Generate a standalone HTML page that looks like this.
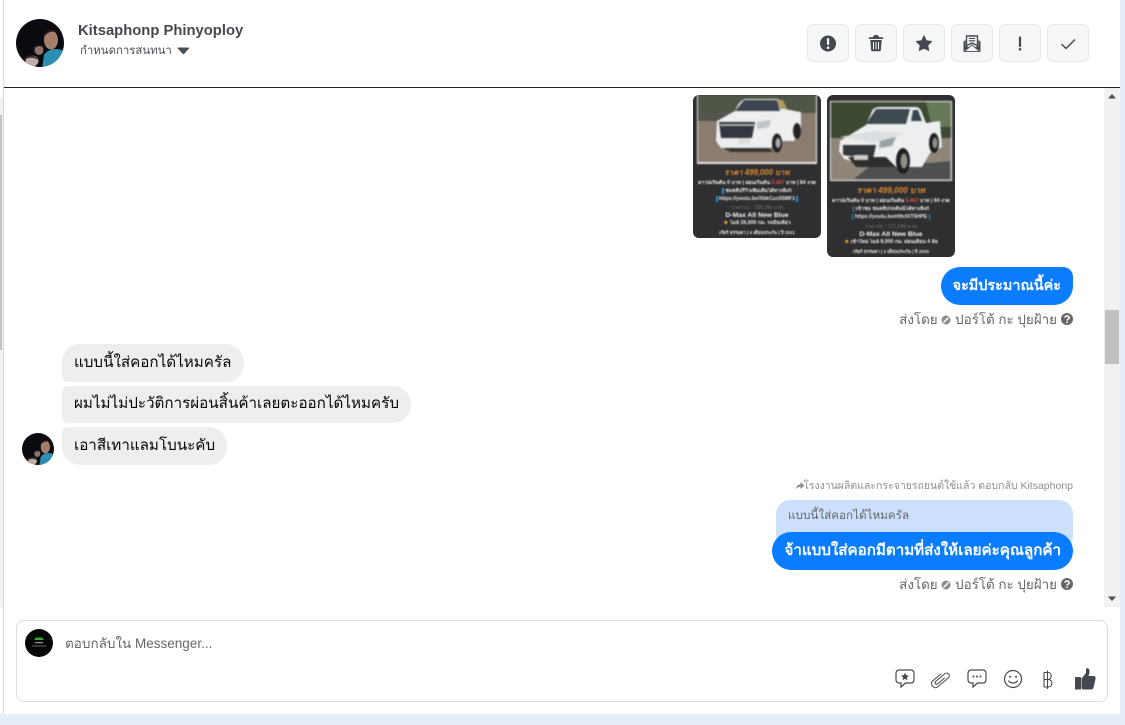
<!DOCTYPE html>
<html lang="th">
<head>
<meta charset="utf-8">
<title>Messenger</title>
<style>
html,body{margin:0;padding:0;width:1125px;height:725px;overflow:hidden;background:#e6eefa;font-family:"Liberation Sans","Noto Sans CJK SC",Tahoma,sans-serif;color:#050505}
*{box-sizing:border-box}
.abs{position:absolute}
#panel{position:absolute;left:0;top:0;width:1120px;height:714px;background:#fff}
#leftline{position:absolute;left:3px;top:0;width:1px;height:714px;background:#d8d8d8}
#hline{position:absolute;left:4px;top:87px;width:1116px;height:1px;background:#222}
.name{position:absolute;left:78px;top:21px;font-size:14.8px;font-weight:bold;color:#444950;line-height:20px;white-space:nowrap}
.sub{position:absolute;left:80px;top:44px;font-size:11.4px;color:#4b4f56;line-height:15px;white-space:nowrap}
.btn{position:absolute;top:24px;width:42px;height:38px;background:#f5f6f7;border:1px solid #e6e8eb;border-radius:6px}
.btn svg{position:absolute;left:0;top:0}
.b{position:absolute;font-size:15.2px;line-height:20px;white-space:nowrap;height:37px;padding:8px 13px;background:#eeeeee;border-radius:18px}
.me{background:#0a7cff;color:#fff;font-weight:bold;font-size:15px}
.by{position:absolute;font-size:13.4px;line-height:18px;color:#65676b;white-space:nowrap}
.pic{position:absolute;background:#2f2f31;border-radius:6px;overflow:hidden;width:128px}
.pic .t{position:absolute;left:0;right:0;text-align:center;white-space:nowrap;overflow:hidden;color:#e6e6e6;font-size:5.2px;line-height:7px;filter:blur(.4px);font-weight:bold}
#track{position:absolute;left:1104px;top:88px;width:16px;height:519px;background:#f1f1f1}
#thumb{position:absolute;left:1105px;top:310px;width:14px;height:54px;background:#c1c1c1}
#ltrack{position:absolute;left:0;top:98px;width:3px;height:509px;background:#f1f1f1}
#lthumb{position:absolute;left:0;top:115px;width:2px;height:235px;background:#c4c4c4}
#box{position:absolute;left:16px;top:620px;width:1092px;height:82px;border:1px solid #dadde1;border-radius:8px;background:#fff}
</style>
</head>
<body>
<div id="panel"></div>
<div id="ltrack"></div>
<div id="lthumb"></div>
<div id="leftline"></div>
<div id="hline"></div>

<svg class="abs" style="left:16px;top:19px" width="48" height="48" viewBox="0 0 48 48">
<defs><clipPath id="c1"><circle cx="24" cy="24" r="24"/></clipPath></defs>
<g clip-path="url(#c1)">
<rect width="48" height="48" fill="#0a0a10"/>
<path d="M28 36C32 29 44 28 50 34V50H26Z" fill="#2b8fb3"/>
<ellipse cx="35" cy="21" rx="7" ry="9.500" fill="#a57f6c"/>
<path d="M27 19C27 9 42 7 44 18L42 14C37 11 31 13 27 19Z" fill="#2a1a14"/>
<ellipse cx="23" cy="31" rx="4.500" ry="5" fill="#8f7268"/>
<path d="M16 31C17 24 28 23 29 29C24 26 20 27 16 31Z" fill="#1c1414"/>
<ellipse cx="16" cy="42" rx="6.500" ry="5.500" fill="#bdaea8"/>
<path d="M8 41C10 35 20 35 22 41C18 38 13 38 8 41Z" fill="#3a2e2c"/>
</g>
</svg>
<div class="name">Kitsaphonp Phinyoploy</div>
<div class="sub">กำหนดการสนทนา</div>
<svg class="abs" style="left:177px;top:47px" width="13" height="8" viewBox="0 0 13 8"><path d="M0.5 1.2Q0.5 0.5 1.5 0.5H11.5Q12.5 0.5 12 1.5L7.3 6.8Q6.5 7.500 5.700 6.800L1 1.800Z" fill="#4b4f56"/></svg>

<div class="btn" style="left:807px"><svg width="42" height="38" viewBox="0 0 42 38"><circle cx="20" cy="18.500" r="8" fill="#444950"/><rect x="19" y="13" width="2.200" height="7" rx="1" fill="#f5f6f7"/><circle cx="20.100" cy="22.700" r="1.300" fill="#f5f6f7"/></svg></div>
<div class="btn" style="left:855px"><svg width="42" height="38" viewBox="0 0 42 38"><path d="M13 12.200H27V14H13Z M17 12.200C17 9.300 23 9.300 23 12.200Z" fill="#444950"/><path d="M14.300 15H25.700L24.800 25.200Q24.700 26.200 23.700 26.200H16.300Q15.300 26.200 15.200 25.200Z" fill="#444950"/><path d="M17.500 17V24.400M20 17V24.400M22.500 17V24.400" stroke="#f5f6f7" stroke-width="1"/></svg></div>
<div class="btn" style="left:903px"><svg width="42" height="38" viewBox="0 0 42 38"><path d="M20 10.800L22.300 15.800L27.600 16.500L23.700 20.200L24.700 25.500L20 22.900L15.300 25.500L16.300 20.200L12.400 16.500L17.700 15.800Z" fill="#444950" stroke="#444950" stroke-width="1" stroke-linejoin="round"/></svg></div>
<div class="btn" style="left:951px"><svg width="42" height="38" viewBox="0 0 42 38"><path d="M14.500 11H25.500V20.500L20 18L14.500 20.500Z" fill="#f5f6f7" stroke="#444950" stroke-width="1.400" stroke-linejoin="round"/><path d="M16.800 13.500H23.200M16.800 15.800H23.200" stroke="#444950" stroke-width="1.100"/><path d="M11.500 16.500L13.500 15V20.500L17 22.300L11.500 26Z" fill="#444950"/><path d="M28.500 16.500L26.500 15V20.500L23 22.300L28.500 26Z" fill="#444950"/><path d="M11.500 26.300H28.500" stroke="#444950" stroke-width="1.200"/><path d="M13 26L20 19.800L27 26" fill="#f5f6f7" stroke="#444950" stroke-width=".9"/></svg></div>
<div class="btn" style="left:999px"><svg width="42" height="38" viewBox="0 0 42 38"><path d="M20 12.500V21" stroke="#444950" stroke-width="2.200" stroke-linecap="round"/><circle cx="20" cy="24.300" r="1.300" fill="#444950"/></svg></div>
<div class="btn" style="left:1047px"><svg width="42" height="38" viewBox="0 0 42 38"><path d="M13.500 19L18 23.500L27 14.500" fill="none" stroke="#444950" stroke-width="1.500"/></svg></div>

<!-- images -->
<div class="pic" style="left:693px;top:95px;height:143px">
<svg class="abs" style="left:4px;top:0;filter:blur(.7px)" width="120" height="69" viewBox="0 0 120 69">
<rect width="120" height="69" fill="#eee"/>
<rect x="1" y="0" width="118" height="67" fill="#8a7c6f"/>
<rect x="1" y="0" width="118" height="18" fill="#4f5648"/>
<path d="M1 16H32V26H1Z" fill="#55544d"/>
<path d="M20 26L38 16Q42 6 48 4H80Q85 5 88 14L103 17H104V35L97 46H78L74 53H24L19 46Z" fill="#eceef0"/>
<path d="M38 16L47 5H80L83 16Z" fill="#3d4650"/>
<path d="M80 5H86L90 14H83Z" fill="#b29b62"/>
<path d="M22 27H58L55 43H24Z" fill="#34383e"/>
<path d="M23 30H57" stroke="#d8d8d8" stroke-width="1.500"/>
<path d="M60 27L74 25L72 32L60 34Z" fill="#bfc4c8"/>
<ellipse cx="80" cy="48" rx="5" ry="9.500" fill="#222"/><ellipse cx="81" cy="48" rx="2.500" ry="5" fill="#aaa"/>
<ellipse cx="100" cy="36" rx="4" ry="8" fill="#222"/>
<path d="M26 53H72L76 57H34Z" fill="#3a3530"/>
<rect x="41" y="43" width="12" height="6" fill="#ddd"/>
</svg>
<div class="t" style="top:73px;color:#d98a35;font-size:7.800px;font-weight:bold;font-style:italic;line-height:9px">ราคา 499,000 บาท</div>
<div class="t" style="top:85px">ดาวน์เริ่มต้น 0 บาท | ผ่อนเริ่มต้น <span style="color:#e05050">5,467</span> บาท | 84 งวด</div>
<div class="t" style="top:93px"><span style="background:#2a8fd0;color:#fff">&nbsp;</span> ชมคลิปรีวิวเพิ่มเติมได้ทางลิงก์</div>
<div class="t" style="top:101px"><span style="background:#2a8fd0;color:#fff">&nbsp;</span> https://youtu.be/XbkCuz0SMF1 <span style="background:#2a8fd0;color:#fff">&nbsp;</span></div>
<div class="t" style="top:110px;color:#777;font-weight:normal">ราคารถ : 738,146 บาท</div>
<div class="t" style="top:117px;font-size:6.800px;font-weight:bold;color:#f2f2f2">D-Max All New Blue</div>
<div class="t" style="top:125px"><span style="color:#e8b030">★</span> ไมล์ 26,000 กม. รถมือเดียว</div>
<div class="t" style="top:134px;font-size:4.500px">เกียร์ ธรรมดา | 4 เดือนประกัน | ปี 2021</div>
</div>

<div class="pic" style="left:827px;top:95px;height:162px">
<svg class="abs" style="left:3px;top:6px;filter:blur(.7px)" width="122" height="80" viewBox="0 0 122 80">
<rect width="122" height="80" fill="#eee"/>
<rect x="1" y="1" width="120" height="78" fill="#8f8579"/>
<rect x="1" y="1" width="120" height="36" fill="#3c4a34"/>
<path d="M96 1H121V26H102Z" fill="#68795a"/>
<path d="M24 78L44 62H100L120 60V78Z" fill="#4e4f50"/>
<path d="M10 40L36 24L42 10Q44 6 50 6H86Q90 6 92 12L96 22L110 20L112 46L100 52L92 66H60L44 66L14 58L9 50Z" fill="#eceef0"/>
<path d="M36 23L46 8H80L76 23Z" fill="#3f4a4f"/>
<path d="M83 9H88L92 20H81Z" fill="#39454c"/>
<path d="M10 36L44 30L73 32L60 38L44 42Z" fill="#dcdfe1"/>
<path d="M13 44H46L43 58L13 54Z" fill="#33383c"/>
<path d="M50 40L66 36L62 45L49 47Z" fill="#99a2a8"/>
<ellipse cx="73" cy="60" rx="7" ry="13" fill="#1f1f20"/><ellipse cx="74" cy="60" rx="3.500" ry="7.500" fill="#8e8e88"/>
<ellipse cx="104" cy="42" rx="5" ry="10" fill="#1f1f20"/><ellipse cx="105" cy="42" rx="2.500" ry="5.500" fill="#8e8e88"/>
<path d="M18 56H56L66 66H60L26 66Z" fill="#2e2e2c"/>
<rect x="24" y="54" width="14" height="5" fill="#ccc"/>
</svg>
<div class="t" style="top:91px;color:#d98a35;font-size:8.200px;font-weight:bold;font-style:italic;line-height:10px">ราคา 499,000 บาท</div>
<div class="t" style="top:103px">ดาวน์เริ่มต้น 0 บาท | ผ่อนเริ่มต้น <span style="color:#e05050">5,467</span> บาท | 84 งวด</div>
<div class="t" style="top:111px"><span style="background:#2a8fd0;color:#fff">&nbsp;</span> เข้าชม ชมคลิปรถคันนี้ได้ทางลิงก์</div>
<div class="t" style="top:119px"><span style="background:#2a8fd0;color:#fff">&nbsp;</span> https://youtu.be/rHtcIXT5HPE <span style="background:#2a8fd0;color:#fff">&nbsp;</span></div>
<div class="t" style="top:129px;color:#777;font-weight:normal">ราคารถ : 722,146 บาท</div>
<div class="t" style="top:136px;font-size:6.800px;font-weight:bold;color:#f2f2f2">D-Max All New Blue</div>
<div class="t" style="top:144px"><span style="color:#e8b030">★</span> เข้าใหม่ ไมล์ 8,000 กม. ผ่อนเดือน 4 ล้อ</div>
<div class="t" style="top:153px;font-size:4.500px">เกียร์ ธรรมดา | 4 เดือนประกัน | ปี 2020</div>
</div>

<!-- messages -->
<div class="b me" style="right:52px;top:267px;height:38px;padding:9px 12px;font-size:14.4px;border-radius:19px 10px 19px 19px">จะมีประมาณนี้ค่ะ</div>
<div class="by" style="right:68px;top:311px">ส่งโดย <svg width="10" height="10" viewBox="0 0 10 10" style="vertical-align:-1px"><circle cx="5" cy="5" r="4.500" fill="#8a8d91"/><path d="M2.500 7.500L7.500 2.500" stroke="#fff" stroke-width="1.500"/></svg> ปอร์โต้ กะ ปุยฝ้าย</div>
<svg class="abs" style="left:1061px;top:313px" width="12" height="12" viewBox="0 0 12 12"><circle cx="6" cy="6" r="6" fill="#65676b"/><path d="M4 4.600C4 2.500 8.200 2.500 8.200 4.700C8.200 6 6.100 6 6.100 7.600" fill="none" stroke="#fff" stroke-width="1.500"/><circle cx="6.100" cy="9.400" r=".9" fill="#fff"/></svg>

<div class="b" style="left:62px;top:344px;height:38px;padding:9px 13px 9px 12px;border-radius:18px 18px 18px 6px">แบบนี้ใส่คอกได้ไหมครัล</div>
<div class="b" style="left:62px;top:386px;padding:8px 12px;border-radius:6px 18px 18px 6px">ผมไม่ไม่ปะวัติการผ่อนสิ้นค้าเลยตะออกได้ไหมครับ</div>
<div class="b" style="left:62px;top:427px;height:38px;padding:9px 12px;border-radius:6px 18px 18px 18px">เอาสีเทาแลมโบนะคับ</div>

<svg class="abs" style="left:22px;top:433px" width="32" height="32" viewBox="0 0 48 48">
<defs><clipPath id="c2"><circle cx="24" cy="24" r="24"/></clipPath></defs>
<g clip-path="url(#c2)">
<rect width="48" height="48" fill="#0a0a10"/>
<path d="M28 36C32 29 44 28 50 34V50H26Z" fill="#2b8fb3"/>
<ellipse cx="35" cy="21" rx="7" ry="9.500" fill="#a57f6c"/>
<path d="M27 19C27 9 42 7 44 18L42 14C37 11 31 13 27 19Z" fill="#2a1a14"/>
<ellipse cx="23" cy="31" rx="4.500" ry="5" fill="#8f7268"/>
<path d="M16 31C17 24 28 23 29 29C24 26 20 27 16 31Z" fill="#1c1414"/>
<ellipse cx="16" cy="42" rx="6.500" ry="5.500" fill="#bdaea8"/>
<path d="M8 41C10 35 20 35 22 41C18 38 13 38 8 41Z" fill="#3a2e2c"/>
</g>
</svg>

<svg class="abs" style="left:795px;top:481px" width="10" height="10" viewBox="0 0 10 10"><path d="M5.500 1L9.500 4.500L5.500 8V5.800C3.500 5.800 2 6.500 1 8.500C1 5.500 3 3.500 5.500 3.200Z" fill="#8a8d91"/></svg>
<div class="abs" style="right:52px;top:479px;font-size:10.500px;line-height:14px;color:#8a8d91;white-space:nowrap">โรงงานผลิตและกระจายรถยนต์ใช้แล้ว ตอบกลับ Kitsaphonp</div>
<div class="abs" style="left:776px;top:500px;width:297px;height:50px;background:#cce0fb;border-radius:14px;padding:8px 12px;font-size:11.700px;line-height:16px;color:#65676b;white-space:nowrap">แบบนี้ใส่คอกได้ไหมครัล</div>
<div class="b me" style="right:52px;top:532px;height:38px;padding:9px 12px 9px 13px;font-size:15.150px;border-radius:19px">จ้าแบบใส่คอกมีตามที่ส่งให้เลยค่ะคุณลูกค้า</div>
<div class="by" style="right:68px;top:576px">ส่งโดย <svg width="10" height="10" viewBox="0 0 10 10" style="vertical-align:-1px"><circle cx="5" cy="5" r="4.500" fill="#8a8d91"/><path d="M2.500 7.500L7.500 2.500" stroke="#fff" stroke-width="1.500"/></svg> ปอร์โต้ กะ ปุยฝ้าย</div>
<svg class="abs" style="left:1061px;top:578px" width="12" height="12" viewBox="0 0 12 12"><circle cx="6" cy="6" r="6" fill="#65676b"/><path d="M4 4.600C4 2.500 8.200 2.500 8.200 4.700C8.200 6 6.100 6 6.100 7.600" fill="none" stroke="#fff" stroke-width="1.500"/><circle cx="6.100" cy="9.400" r=".9" fill="#fff"/></svg>

<!-- scrollbar -->
<div id="track"></div>
<div id="thumb"></div>
<svg class="abs" style="left:1105px;top:92px" width="14" height="8" viewBox="0 0 14 8"><path d="M3 6.500L7 2L11 6.500Z" fill="#505050"/></svg>
<svg class="abs" style="left:1105px;top:595px" width="14" height="8" viewBox="0 0 14 8"><path d="M3 1.500L7 6L11 1.500Z" fill="#505050"/></svg>

<!-- composer -->
<div id="box"></div>
<svg class="abs" style="left:25px;top:629px" width="28" height="28" viewBox="0 0 28 28">
<circle cx="14" cy="14" r="14" fill="#060806"/>
<path d="M9 11L11 8.500H17L19 11Z" fill="#3fa63a"/>
<rect x="10" y="13" width="8" height="1.200" fill="#9a9a9a"/>
<rect x="7" y="16.500" width="14" height="1" fill="#666"/>
</svg>
<div class="abs" style="left:65px;top:635px;font-size:13.500px;line-height:17px;color:#65676b;white-space:nowrap">ตอบกลับใน Messenger...</div>

<svg class="abs" style="left:893px;top:666px" width="24" height="24" viewBox="0 0 24 24"><path d="M6.500 4H17.500Q21 4 21 7.500V13.500Q21 17 17.500 17H12.500L8 21V17H6.500Q3 17 3 13.500V7.500Q3 4 6.500 4Z" fill="none" stroke="#444950" stroke-width="1.200"/><path d="M12 6.500L13.200 9.200L16 9.500L13.900 11.500L14.500 14.300L12 12.900L9.500 14.300L10.100 11.500L8 9.500L10.800 9.200Z" fill="#444950"/></svg>
<svg class="abs" style="left:929px;top:667px" width="24" height="24" viewBox="0 0 24 24"><g transform="translate(12 12) rotate(50) scale(.78) translate(-12 -10)"><path d="M7 6V20C7 25.500 17 25.500 17 20V2C17 -3 10 -3 10 2V17C10 20 14 20 14 17V6" fill="none" stroke="#55595f" stroke-width="1.400" stroke-linecap="round"/></g></svg>
<svg class="abs" style="left:965px;top:666px" width="24" height="24" viewBox="0 0 24 24"><path d="M6.500 4H17.500Q21 4 21 7.500V13.500Q21 17 17.500 17H12.500L8 21V17H6.500Q3 17 3 13.500V7.500Q3 4 6.500 4Z" fill="none" stroke="#444950" stroke-width="1.200"/><circle cx="8.500" cy="10.500" r="1" fill="#444950"/><circle cx="12" cy="10.500" r="1" fill="#444950"/><circle cx="15.500" cy="10.500" r="1" fill="#444950"/></svg>
<svg class="abs" style="left:1001px;top:667px" width="24" height="24" viewBox="0 0 24 24"><circle cx="12" cy="12" r="8.500" fill="none" stroke="#444950" stroke-width="1.200"/><circle cx="9" cy="9.800" r="1" fill="#444950"/><circle cx="15" cy="9.800" r="1" fill="#444950"/><path d="M7.500 13.500C9 16.800 15 16.800 16.500 13.500" fill="none" stroke="#444950" stroke-width="1.200"/></svg>
<svg class="abs" style="left:1036px;top:668px" width="24" height="24" viewBox="0 0 24 24"><path d="M8 4.500H12.500C16 4.500 16 11 12.500 11.500C17 11.500 17 19 12.500 19H8M8 4.500V19M8 11.500H12.500M11.500 2.500V21" fill="none" stroke="#444950" stroke-width="1.100"/></svg>
<svg class="abs" style="left:1073px;top:667px" width="24" height="24" viewBox="0 0 24 24"><rect x="2" y="10" width="6" height="12.500" rx=".8" fill="#444950"/><path d="M8.500 11.500L13 6V2C13 1 16 .500 16.500 3.500C16.800 5.500 16 7.500 15.500 9H21Q23 9.500 22.500 12L20.500 20.500Q20 22.500 18 22.500H10.500Q8.500 22.500 8.500 20.500Z" fill="#444950"/></svg>
</body>
</html>
